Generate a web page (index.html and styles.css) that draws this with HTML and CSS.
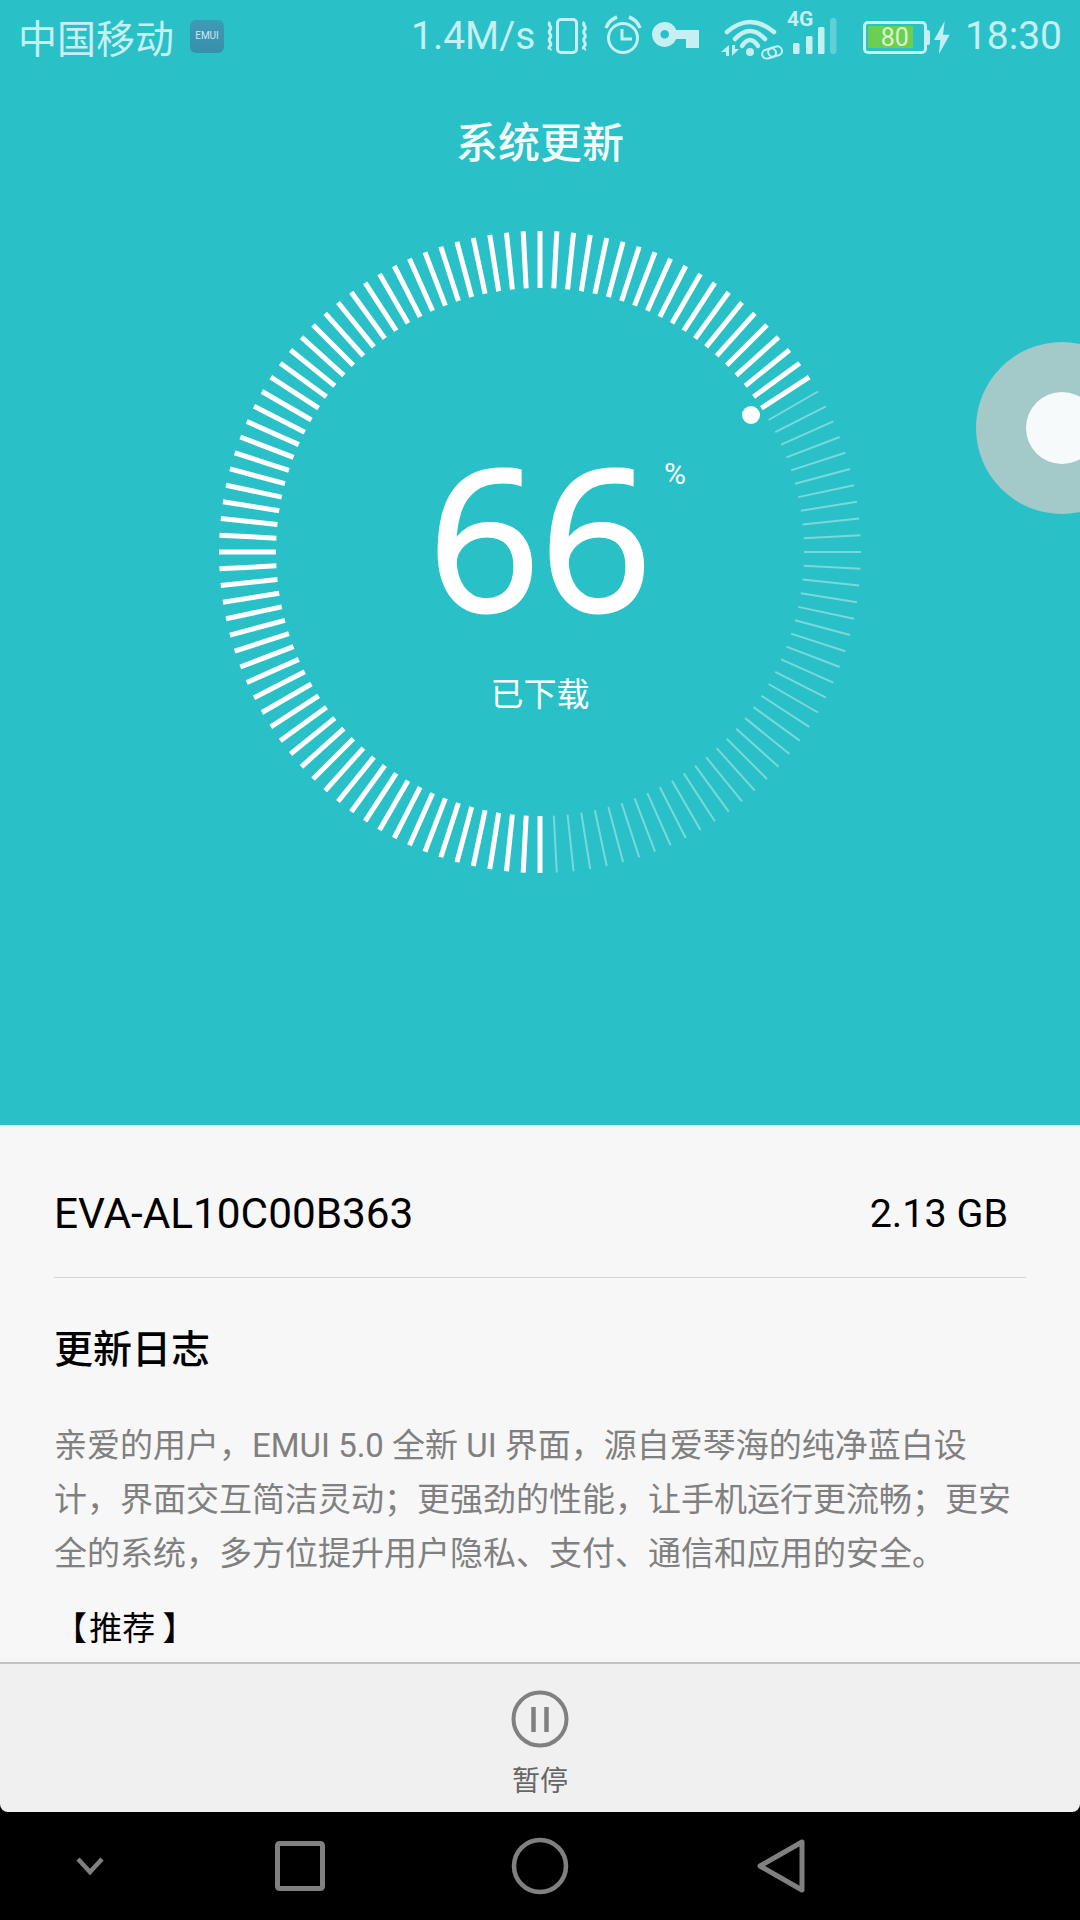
FILE: index.html
```html
<!DOCTYPE html>
<html lang="zh-CN">
<head>
<meta charset="utf-8">
<title>系统更新</title>
<link rel="stylesheet" href="styles.css">
</head>
<body>
<div class="screen">
  <section class="hero">
    <div class="status">
      <div class="status-left">
        <span class="carrier">中国移动</span>
        <span class="emui"><span>EMUI</span></span>
      </div>
      <div class="status-right">
        <span class="speed">1.4M/s</span>
        <svg class="ic ic-vib" width="42" height="36" viewBox="0 0 42 36"><rect x="10.500" y="1.500" width="19" height="33" rx="3.500" fill="none" stroke="#c6eff1" stroke-width="3"/><path d="M3 4c-3 3 3 5 0 8s3 5 0 8 3 5 0 8 1 3 0 4M37.500 4c-3 3 3 5 0 8s3 5 0 8 3 5 0 8 1 3 0 4" fill="none" stroke="#c6eff1" stroke-width="3"/></svg>
        <svg class="ic ic-alarm" width="38" height="40" viewBox="0 0 38 40"><circle cx="19" cy="23" r="14.500" fill="none" stroke="#c6eff1" stroke-width="3"/><path d="M18 14v10h10" fill="none" stroke="#c6eff1" stroke-width="3"/><path d="M2 13Q5 5 13 2M36 13Q33 5 25 2" fill="none" stroke="#c6eff1" stroke-width="3.500"/></svg>
        <svg class="ic ic-key" width="48" height="26" viewBox="0 0 48 26"><path d="M12.700 0a12.500 12.500 0 0 1 11.500 8H47V26H34V17H24.200A12.500 12.500 0 1 1 12.700 0ZM12.700 8a4.300 4.300 0 1 0 .01 0Z" fill="#c6eff1" fill-rule="evenodd"/></svg>
        <svg class="ic ic-wifi" width="62" height="44" viewBox="0 0 62 44"><path d="M6 16Q29-4 53 16M14 23Q29 7 44 23" fill="none" stroke="#c6eff1" stroke-width="4.500" stroke-linecap="round"/><path d="M21 30Q29 18 37 30" fill="none" stroke="#c6eff1" stroke-width="4.500" stroke-linecap="round"/><circle cx="29" cy="36" r="4" fill="#c6eff1"/><path d="M8 29V40H5V36H0ZM11 29H14V33H18L11 40Z" fill="#c6eff1"/><g fill="none" stroke="#c6eff1" stroke-width="2"><rect x="41" y="33" width="14" height="9" rx="4.500" transform="rotate(-14 48 37)"/><rect x="47" y="31" width="14" height="9" rx="4.500" transform="rotate(-14 54 35)"/></g></svg>
        <div class="signal">
          <span class="net">4G</span>
          <svg width="44" height="36" viewBox="0 0 44 36"><rect x="0" y="25" width="6.500" height="11" rx="1.500" fill="#c6eff1"/><rect x="13" y="18" width="6.500" height="18" rx="1.500" fill="#c6eff1"/><rect x="25" y="9" width="6.500" height="27" rx="1.500" fill="#c6eff1"/><rect x="37" y="0" width="6.500" height="36" rx="3" fill="#c6eff1" opacity=".35"/></svg>
        </div>
        <div class="battery"><span class="level"></span><span class="pct">80</span><span class="cap"></span></div>
        <svg class="ic ic-bolt" width="16" height="34" viewBox="0 0 16 34"><path d="M10.700 0 0 19H6.300L5 33 15.700 13.700H9Z" fill="#c6eff1"/></svg>
        <span class="time">18:30</span>
      </div>
    </div>
    <h1 class="title">系统更新</h1>
    <div class="dial">
      <svg class="ticks" id="ticks" width="660" height="660" viewBox="-330 -330 660 660"></svg>
      <span class="dial-dot"></span>
      <div class="readout">
        <div class="value"><span class="num">66</span><span class="unit">%</span></div>
        <div class="caption">已下载</div>
      </div>
    </div>
    <div class="float-ball"><span></span></div>
  </section>
  <section class="details">
    <div class="row"><span class="name">EVA-AL10C00B363</span><span class="size">2.13 GB</span></div>
    <div class="log">
      <h2>更新日志</h2>
      <p>亲爱的用户，EMUI 5.0 全新 UI 界面，源自爱琴海的纯净蓝白设计，界面交互简洁灵动；更强劲的性能，让手机运行更流畅；更安全的系统，多方位提升用户隐私、支付、通信和应用的安全。</p>
      <div class="tag">【 推荐 <span class="tag-end">】</span></div>
    </div>
  </section>
  <section class="action">
    <svg width="58" height="58" viewBox="0 0 58 58"><circle cx="29" cy="29" r="26.500" fill="none" stroke="#808080" stroke-width="4"/><path d="M22.500 17v25M35.500 17v25" stroke="#808080" stroke-width="4.500"/></svg>
    <span>暂停</span>
  </section>
  <nav class="navbar">
    <svg class="nav-chev" width="30" height="18" viewBox="0 0 30 18"><path d="M3 2 15 15 27 2" fill="none" stroke="#808080" stroke-width="4.500"/></svg>
    <svg class="nav-square" width="50" height="50" viewBox="0 0 50 50"><rect x="2.500" y="2.500" width="45" height="45" rx="2" fill="none" stroke="#808080" stroke-width="5"/></svg>
    <svg class="nav-circle" width="58" height="58" viewBox="0 0 58 58"><circle cx="29" cy="29" r="26" fill="none" stroke="#808080" stroke-width="4.500"/></svg>
    <svg class="nav-back" width="50" height="56" viewBox="0 0 50 56"><path d="M46 4 4 28l42 24z" fill="none" stroke="#808080" stroke-width="5" stroke-linejoin="round"/></svg>
  </nav>
</div>
<script src="ticks.js"></script>
</body>
</html>
```
FILE: styles.css
```css
* { box-sizing: border-box; }
html, body { margin: 0; padding: 0; }
body { width: 1080px; height: 1920px; overflow: hidden; font-family: Roboto, "Noto Sans CJK SC", sans-serif; background: #000; }
.screen { width: 1080px; height: 1920px; display: flex; flex-direction: column; }

.hero { position: relative; height: 1125px; background: #29c0c8; overflow: hidden; flex: none; }
.status { height: 72px; display: flex; justify-content: space-between; align-items: center; padding: 0 18px 0 18px; color: #c6eff1; }
.status-left { display: flex; align-items: center; gap: 16px; }
.carrier { font: 400 39px/1 "Noto Sans CJK SC", sans-serif; }
.emui { width: 34px; height: 33px; border-radius: 6px; background: linear-gradient(#3e9ab6, #3690ad); display: flex; align-items: center; justify-content: center; }
.emui span { font: 400 10px/1 Roboto, sans-serif; color: #cfe9ef; }
.status-right { display: flex; align-items: center; }
.speed, .time { font: 400 39px/1 Roboto, sans-serif; }
.ic { flex: none; }
.ic-vib { margin-left: 12px; }
.ic-alarm { margin-left: 15px; margin-top: -2px; }
.ic-key { margin-left: 10px; margin-top: -2px; }
.ic-wifi { margin-left: 20.500px; margin-top: 3px; }
.signal { position: relative; width: 44px; height: 36px; margin-left: 10px; }
.signal svg { display: block; }
.net { position: absolute; left: -6px; top: -9px; font: 700 21px/21px Roboto, sans-serif; }
.battery { position: relative; width: 64px; height: 33px; margin-left: 26px; margin-top: 3px; border: 3px solid #c6eff1; border-radius: 5px; }
.level { position: absolute; left: 2px; top: 2px; width: 45px; height: 22px; background: #6ccf55; }
.pct { position: absolute; left: 5px; top: 0; width: 48px; font: 400 25px/27px Roboto, sans-serif; text-align: center; color: #d9f5c8; }
.cap { position: absolute; right: -6px; top: 6px; width: 3px; height: 15px; background: #c6eff1; border-radius: 0 2px 2px 0; }
.ic-bolt { margin-left: 7px; margin-top: 3px; }
.time { margin-left: 15px; }

.title { position: absolute; left: 0; right: 0; top: 115px; margin: 0; text-align: center; font: 500 42px/50px "Noto Sans CJK SC", sans-serif; color: #f2fcfc; }
.dial { position: absolute; left: 210px; top: 222px; width: 660px; height: 660px; }
.ticks { display: block; }
.dial-dot { position: absolute; left: 531.700px; top: 184px; width: 18px; height: 18px; border-radius: 50%; background: #fff; }
.readout { position: absolute; left: 0; right: 0; top: 0; bottom: 0; display: flex; flex-direction: column; align-items: center; color: #fff; }
.value { position: relative; margin-top: 223px; }
.num { display: block; font: 400 196px/180px "Open Sans", sans-serif; -webkit-text-stroke: 3px #fff; }
.unit { position: absolute; left: 236px; top: 13px; font: 400 30px/32px Roboto, sans-serif; }
.caption { margin-top: 47px; font: 400 33px/40px "Noto Sans CJK SC", sans-serif; }
.float-ball { position: absolute; left: 976px; top: 342px; width: 172px; height: 172px; border-radius: 50%; background: #a3c9c9; display: flex; align-items: center; justify-content: center; }
.float-ball span { width: 72px; height: 72px; border-radius: 50%; background: #f6fafb; }

.details { height: 537px; background: #f7f7f7; padding: 0 54px; flex: none; overflow: hidden; }
.row { height: 153px; padding: 26px 18px 0 0; border-bottom: 1px solid #d5d5d5; display: flex; justify-content: space-between; align-items: center; font: 400 39.500px/48px Roboto, sans-serif; color: #000; }
.name { font-size: 42.300px; }
.log h2 { margin: 44px 0 0; font: 500 39px/48px "Noto Sans CJK SC", sans-serif; color: #000; }
.log p { margin: 49px 0 0; font: 400 33px/54px Roboto, "Noto Sans CJK SC", sans-serif; color: #808080; }
.tag { margin-top: 26px; font: 400 33px/44px Roboto, "Noto Sans CJK SC", sans-serif; word-spacing: -6px; color: #000; }
.tag-end { margin-left: 5px; }

.action { height: 150px; background: #f0f0f0; border-top: 2px solid #c4c4c4; border-radius: 0 0 8px 8px; display: flex; flex-direction: column; align-items: center; padding-top: 26px; flex: none; }
.action svg { display: block; }
.action span { margin-top: 14px; font: 400 28px/34px "Noto Sans CJK SC", sans-serif; color: #666; }

.navbar { position: relative; height: 108px; background: #000; flex: none; display: flex; align-items: center; }
.nav-chev { margin-left: 75px; }
.nav-square { margin-left: 170px; }
.nav-circle { margin-left: 186px; }
.nav-back { margin-left: 187px; }
```
FILE: ticks.js
```js
var svg = document.getElementById('ticks');
var NS = 'http://www.w3.org/2000/svg';
for (var i = 0; i < 120; i++) {
  var deg = i * 3;
  var on = deg >= 180 || deg <= 57;
  var a = deg * Math.PI / 180;
  var s = Math.sin(a), c = -Math.cos(a);
  var l = document.createElementNS(NS, 'line');
  l.setAttribute('x1', (264 * s).toFixed(2));
  l.setAttribute('y1', (264 * c).toFixed(2));
  l.setAttribute('x2', (321 * s).toFixed(2));
  l.setAttribute('y2', (321 * c).toFixed(2));
  l.setAttribute('stroke', '#fff');
  l.setAttribute('stroke-width', on ? 5 : 2);
  if (!on) l.setAttribute('stroke-opacity', '0.38');
  svg.appendChild(l);
}
```
